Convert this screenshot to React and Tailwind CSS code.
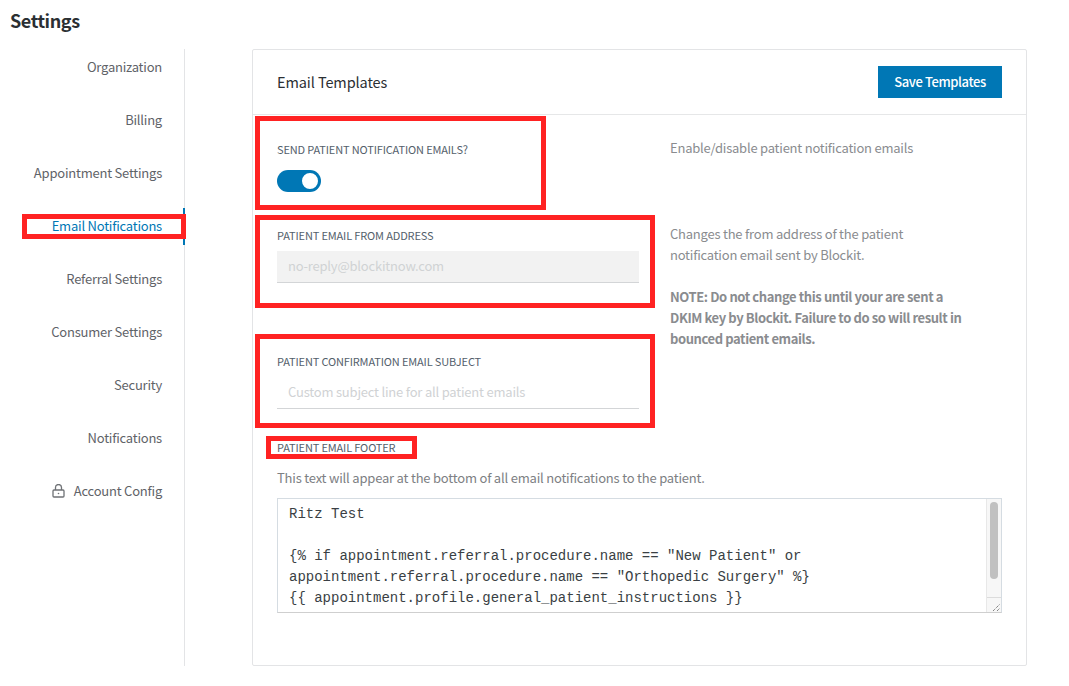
const F = '"Noto Sans CJK SC", "Noto Sans", sans-serif';

function Nav({ children, active, icon }) {
  return (
    <div className={`h-[53px] flex items-center justify-end gap-[9px] pr-[22px] text-[13px] tracking-[-0.22px] ${active ? 'text-[#0077b5]' : 'text-[#5f6368]'}`}>
      {icon}
      <span>{children}</span>
    </div>
  );
}

function Lock() {
  return (
    <svg width="13" height="14" viewBox="0 0 13 14" fill="none" stroke="#6f7276" strokeWidth="1.3">
      <path d="M3.5 6V3.5a3 3 0 0 1 6 0V6" />
      <rect x="1" y="6" width="11" height="7" rx="1" />
      <circle cx="6.5" cy="9.5" r="0.8" fill="#6f7276" stroke="none" />
    </svg>
  );
}

function Label({ children }) {
  return <div className="text-[11px] tracking-[-0.15px] leading-[16px] text-[#53606b]">{children}</div>;
}

function RedBox({ className }) {
  return <div className={`absolute border-[5px] border-[#ff2222] pointer-events-none ${className}`} />;
}

export default function App() {
  return (
    <div className="relative w-[1069px] h-[686px] bg-white overflow-hidden" style={{ fontFamily: F }}>
      <h1 className="pl-[10px] pt-[8px] h-[49px] text-[18px] tracking-[-0.4px] leading-[24px] font-semibold text-[#2b2f33]">Settings</h1>
      <div className="flex h-[617px]">
        <aside className="relative w-[185px] border-r border-[#e3e4e6]">
          <div className="-mt-[9px]">
            <Nav>Organization</Nav>
            <Nav>Billing</Nav>
            <Nav>Appointment Settings</Nav>
            <Nav active>Email Notifications</Nav>
            <Nav>Referral Settings</Nav>
            <Nav>Consumer Settings</Nav>
            <Nav>Security</Nav>
            <Nav>Notifications</Nav>
            <Nav icon={<Lock />}>Account Config</Nav>
          </div>
          <div className="absolute right-[-1px] top-[159px] w-[2px] h-[37px] bg-[#0077b5]" />
        </aside>
        <main className="ml-[67px] w-[775px] border border-[#e3e4e6] rounded-[2px]">
          <header className="h-[65px] flex items-center justify-between pl-[24px] pr-[24px] border-b border-[#e6e7e8]">
            <span className="text-[14.5px] tracking-[-0.1px] text-[#2b2f33]">Email Templates</span>
            <button className="w-[124px] h-[32px] bg-[#0077b5] text-white text-[13px] tracking-[-0.4px] font-medium">Save Templates</button>
          </header>
          <div className="px-[24px]">
            <div className="flex">
              <div className="w-[362px] shrink-0">
                <div className="pt-[26px] h-[100px]">
                  <Label>SEND PATIENT NOTIFICATION EMAILS?</Label>
                  <div className="mt-[13px] w-[44px] h-[22px] rounded-full bg-[#0077b5] relative">
                    <div className="absolute right-[1px] top-[1px] w-[20px] h-[20px] rounded-full bg-white border-2 border-[#0077b5]" />
                  </div>
                </div>
                <div className="pt-[12px] h-[126px]">
                  <Label>PATIENT EMAIL FROM ADDRESS</Label>
                  <div className="mt-[8px] h-[32px] pb-[2px] bg-[#f2f2f2] border-b border-[#d3d5d7] pl-[11px] flex items-center text-[13px] tracking-[-0.2px] text-[#d0d2d4]">no-reply@blockitnow.com</div>
                </div>
                <div className="pt-[12px] h-[98px]">
                  <Label>PATIENT CONFIRMATION EMAIL SUBJECT</Label>
                  <div className="mt-[8px] h-[32px] pb-[2px] border-b border-[#d3d5d7] pl-[11px] flex items-center text-[13px] tracking-[-0.2px] text-[#d0d2d4]">Custom subject line for all patient emails</div>
                </div>
              </div>
              <div className="ml-[31px] w-[296px] pt-[22px] text-[13px] tracking-[-0.22px] leading-[21px] text-[#8a8c8f]">
                <p>Enable/disable patient notification emails</p>
                <p className="mt-[65px]">Changes the from address of the patient notification email sent by Blockit.</p>
                <p className="mt-[21px] font-semibold tracking-[-0.4px]">NOTE: Do not change this until your are sent a DKIM key by Blockit. Failure to do so will result in bounced patient emails.</p>
              </div>
            </div>
            <div>
              <Label>PATIENT EMAIL FOOTER</Label>
              <p className="mt-[13px] text-[13px] tracking-[-0.2px] leading-[20px] text-[#7d8083]">This text will appear at the bottom of all email notifications to the patient.</p>
              <div className="mt-[10px] h-[115px] border border-[#d5dce2] border-b-[#cfcfcf] flex">
                <div className="flex-1 pl-[11px] pt-[5px] overflow-hidden text-[14px] leading-[21px] text-[#3a3f44] whitespace-pre" style={{ fontFamily: '"Liberation Mono", monospace' }}>
{`Ritz Test

{% if appointment.referral.procedure.name == "New Patient" or
appointment.referral.procedure.name == "Orthopedic Surgery" %}
{{ appointment.profile.general_patient_instructions }}`}
                </div>
                <div className="w-[15px] bg-[#f7f7f7] border-l border-[#e8e8e8] flex flex-col">
                  <div className="flex-1 pt-[3px] flex justify-center">
                    <div className="w-[8px] h-[77px] rounded-full bg-[#c1c1c1]" />
                  </div>
                  <div className="h-[15px] border-t border-[#dcdcdc] relative">
                    <svg width="14" height="14" viewBox="0 0 14 14" stroke="#555" strokeWidth="1" strokeDasharray="1 1" className="absolute left-0 top-0">
                      <path d="M6 13 L13 6 M10 13 L13 10" />
                    </svg>
                  </div>
                </div>
              </div>
            </div>
          </div>
        </main>
      </div>
      <RedBox className="left-[22px] top-[214px] w-[164px] h-[25px]" />
      <RedBox className="left-[255px] top-[116px] w-[291px] h-[94px]" />
      <RedBox className="left-[255px] top-[215px] w-[400px] h-[93px]" />
      <RedBox className="left-[255px] top-[334px] w-[400px] h-[94px]" />
      <RedBox className="left-[266px] top-[436px] w-[151px] h-[23px]" />
    </div>
  );
}
